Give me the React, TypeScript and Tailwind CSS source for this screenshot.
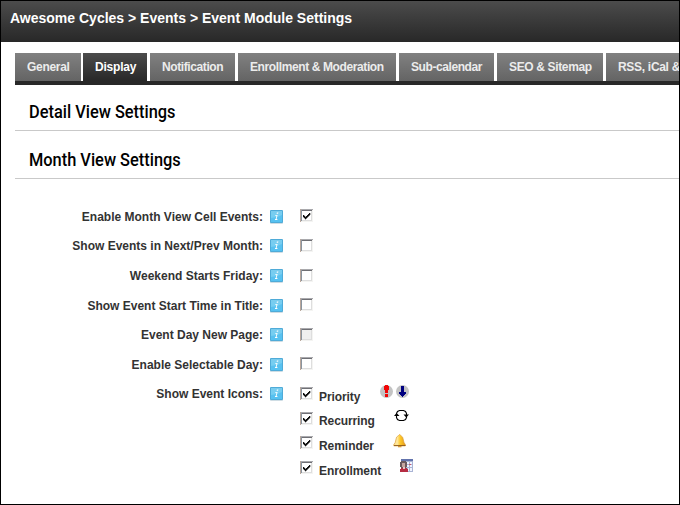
import type { ReactNode } from 'react';

const tabs = [
  { label: 'General', box: 'w-[66px] mr-[2px]', text: 'tracking-[-0.3px]' },
  { label: 'Display', box: 'w-[64px] mr-[3px]', text: 'tracking-[-0.2px]', active: true },
  { label: 'Notification', box: 'w-[85px] mr-[3px]', text: 'tracking-[-0.4px]' },
  { label: 'Enrollment & Moderation', box: 'w-[158px] mr-[3px]', text: 'tracking-[-0.39px]' },
  { label: 'Sub-calendar', box: 'w-[95px] mr-[3px]', text: 'tracking-[-0.42px]' },
  { label: 'SEO & Sitemap', box: 'w-[106px] mr-[3px]', text: 'tracking-[-0.35px]' },
  { label: 'RSS, iCal &', box: 'w-[73px]', text: 'tracking-[-0.3px]' },
];

const rows = [
  { label: 'Enable Month View Cell Events:', h: 'h-[29px]', box: 'mt-0', checked: true },
  { label: 'Show Events in Next/Prev Month:', h: 'h-[30px]', box: 'mt-[1px]' },
  { label: 'Weekend Starts Friday:', h: 'h-[30px]', box: 'mt-[1px]' },
  { label: 'Show Event Start Time in Title:', h: 'h-[29px]', box: 'mt-0' },
  { label: 'Event Day New Page:', h: 'h-[30px]', box: 'mt-[1px]', disabled: true },
  { label: 'Enable Selectable Day:', h: 'h-[29px]', box: 'mt-0' },
];

function Checkbox({ checked = false, disabled = false }: { checked?: boolean; disabled?: boolean }) {
  return (
    <svg className="block h-[13px] w-[13px] shrink-0" viewBox="0 0 13 13" shapeRendering="crispEdges">
      <path d="M0 0h13v13H0z" fill="#f4f4f2" />
      <path d="M1 1h11v11H1z" fill={disabled ? '#efefef' : '#fff'} />
      <path d="M0 0h13v1H0z" fill="#a9a9ad" />
      <path d="M1 1h11v1H1z" fill="#6f6f74" />
      <path d="M0 0h1v13H0z" fill="#b9a79c" />
      <path d="M1 1h1v11H1z" fill="#8a949e" />
      <path d="M2 11h10v1H2zM11 2h1v10h-1z" fill="#dedede" />
      {checked && <path d="M3 6h1v2H3zM4 7h1v2H4zM5 8h1v2H5zM6 7h1v2H6zM7 6h1v2H7zM8 5h1v2H8zM9 4h1v2H9z" fill="#111" stroke="#111" strokeWidth=".3" />}
    </svg>
  );
}

function Info() {
  return (
    <svg className="block h-[14px] w-[13px] shrink-0" viewBox="0 0 13 14">
      <defs>
        <linearGradient id="info" x1="0" y1="0" x2="0" y2="1">
          <stop offset="0" stopColor="#7accee" />
          <stop offset="1" stopColor="#6fd0f6" />
        </linearGradient>
      </defs>
      <rect y="1" width="13" height="13" rx="1" fill="#cfdde4" />
      <rect width="13" height="13" rx="1" fill="#4fabd8" />
      <rect x="1" y="1" width="11" height="11" fill="url(#info)" />
      <path d="M1 8Q7 8 12 5v7H1z" fill="#42b7ec" opacity=".55" />
      <path d="M6.900 2.500h1.500l-.3 1.300H6.600zM5.300 5h2.300l-1 4h.9l-.2 .9H4.900l.2-.9h.6l.8-3.200H5.100z" fill="#fff" />
    </svg>
  );
}

function PriorityIcons() {
  return (
    <svg className="block h-[13px] w-[30px]" viewBox="0 0 30 13">
      <circle cx="6.500" cy="6.500" r="6.500" fill="#c3c3c3" />
      <circle cx="22.500" cy="6.500" r="6.500" fill="#c3c3c3" />
      <path d="M5 0h3v1h1v4H8v3H5V5H4V1h1zM5 9h3v3H5z" fill="#f00606" />
      <path d="M21 1h3v6h2v2h-1v1h-1v1h-1v1h-1v-1h-1v-1h-1V9h-1V7h2z" fill="#000080" />
    </svg>
  );
}

function RecurIcon() {
  return (
    <svg className="block h-[13px] w-[15px]" viewBox="0 0 15 13" fill="none" stroke="#000" strokeWidth="1.100">
      <path d="M2.500 6V4.500L3.500 2.500 5.500 1.500h4l2 1 1 2V6M12.500 7v1.500l-1 2-2 1h-4l-2-1-1-2V6" />
      <path d="M9.500 5.500h5.500l-2.750 3zM0 7h5.500L2.600 4z" fill="#000" stroke="none" />
    </svg>
  );
}

function BellIcon() {
  return (
    <svg className="block h-[14px] w-[14px]" viewBox="0 0 14 14">
      <defs>
        <linearGradient id="bell">
          <stop offset="0" stopColor="#ffdc80" />
          <stop offset=".3" stopColor="#ffe9a0" />
          <stop offset=".55" stopColor="#ffc928" />
          <stop offset="1" stopColor="#e39a1c" />
        </linearGradient>
      </defs>
      <path d="M5.500 1.500Q6.500-.5 7.800 1.500q2.400 1 2.600 4.500.2 2.700 1.900 4.500v1.400H.8v-1.400Q2.600 8.800 2.800 6 3 2.500 5.500 1.500z" fill="url(#bell)" stroke="#dba040" strokeWidth=".7" />
      <path d="M1 11.500h11.500" stroke="#8f5a1c" strokeWidth=".9" />
      <path d="M5 12h3.500v1.300H5z" fill="#d79a3a" />
    </svg>
  );
}

function EnrollIcon() {
  return (
    <svg className="block h-[13px] w-[13px]" viewBox="0 0 13 13" shapeRendering="crispEdges">
      <path d="M1 0h12v13H1z" fill="#a9b4d4" />
      <path d="M1 0h12v2H1z" fill="#6273ad" />
      <path d="M7 3h2v2H7zM10 3h2v2h-2zM7 6h2v2H7zM10 6h2v2h-2zM8 9h1v3H8zM10 9h2v3h-2z" fill="#f1f4ff" />
      <path d="M9 5h2v1H9z" fill="#d85368" />
      <path d="M1 2h5v1h1v5H6v1H1V8H0V3h1z" fill="#6a595e" />
      <path d="M2 4h3v4H2z" fill="#c5a5a0" />
      <path d="M1 9h6v1h1v3H0v-3h1z" fill="#b52c42" />
      <path d="M3 8h2v2H3z" fill="#e5c8c5" />
    </svg>
  );
}

const options: { label: string; h: string; text: string; pad: string; icon: ReactNode }[] = [
  { label: 'Priority', h: 'h-[25px]', text: 'mt-[2px] w-[61px] tracking-[-0.1px]', pad: '-mt-[2px]', icon: <PriorityIcons /> },
  { label: 'Recurring', h: 'h-[24px]', text: 'mt-[1px] w-[75px] tracking-[-0.1px]', pad: '-mt-[3px]', icon: <RecurIcon /> },
  { label: 'Reminder', h: 'h-[25px]', text: 'mt-[2px] w-[74px] tracking-[-0.05px]', pad: '-mt-[2px]', icon: <BellIcon /> },
  { label: 'Enrollment', h: 'h-[25px]', text: 'mt-[2px] w-[81px] tracking-[-0.05px]', pad: '-mt-[2px]', icon: <EnrollIcon /> },
];

function Heading({ children }: { children: string }) {
  return (
    <h2 className="ml-[14px] h-[48px] border-b border-[#c9c9c9] pt-[17px] pl-[14px] leading-[24px]">
      <span className="inline-block origin-left scale-x-[0.91] whitespace-nowrap font-['Roboto',sans-serif] text-[18px] font-medium text-black">
        {children}
      </span>
    </h2>
  );
}

export default function App() {
  return (
    <div className="h-[505px] w-[680px] overflow-hidden border border-black bg-white font-['Liberation_Sans',Arial,sans-serif] text-[12px] font-bold text-[#333]">
      <header className="h-[41px] bg-linear-to-b from-[#4c4c4c] to-[#282828] pt-[8px] pl-[9px] text-[14px] leading-[18px] text-white">
        <span className="whitespace-nowrap">Awesome Cycles &gt; Events &gt; Event Module Settings</span>
      </header>
      <nav className="mt-[11px] ml-[14px] flex h-[32px] border-b-4 border-[#282828]">
        {tabs.map((t) => (
          <div
            key={t.label}
            className={`h-[28px] shrink-0 whitespace-nowrap bg-linear-to-b pl-[12px] leading-[28px] ${t.box} ${
              t.active ? 'from-[#4c4c4c] to-[#282828] text-white' : 'from-[#818181] to-[#646464] text-[#ececec]'
            }`}
          >
            <span className={t.text}>{t.label}</span>
          </div>
        ))}
      </nav>
      <div className="-mt-[2px]">
        <Heading>Detail View Settings</Heading>
        <Heading>Month View Settings</Heading>
      </div>
      <main className="mt-[30px]">
        {rows.map((r) => (
          <div key={r.label} className={`flex ${r.h}`}>
            <div className="w-[262px] text-right leading-[16px]">{r.label}</div>
            <div className="mt-[1px] ml-[7px]"><Info /></div>
            <div className={`ml-[17px] ${r.box}`}><Checkbox checked={r.checked} disabled={r.disabled} /></div>
          </div>
        ))}
        <div className="flex">
          <div className="w-[262px] text-right leading-[16px]">Show Event Icons:</div>
          <div className="mt-[1px] ml-[7px]"><Info /></div>
          <div className="mt-[1px] ml-[17px]">
            {options.map((o) => (
              <div key={o.label} className={`flex items-start ${o.h}`}>
                <Checkbox checked />
                <span className={`ml-[6px] leading-[16px] ${o.text}`}>{o.label}</span>
                <span className={o.pad}>{o.icon}</span>
              </div>
            ))}
          </div>
        </div>
      </main>
    </div>
  );
}
